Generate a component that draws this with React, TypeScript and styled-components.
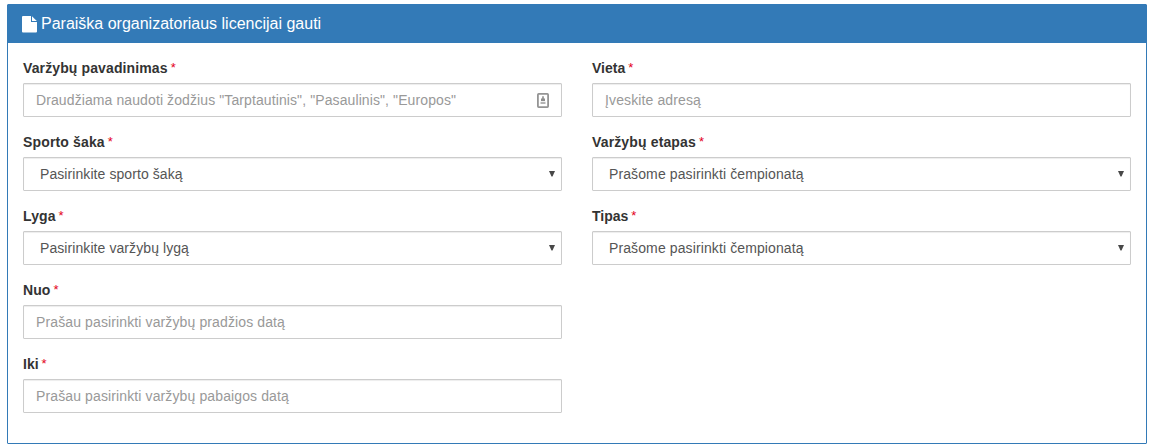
import React from "react";
import styled, { createGlobalStyle } from "styled-components";

const GlobalStyle = createGlobalStyle`
  *, *::before, *::after { box-sizing: border-box; }
  body {
    margin: 0;
    background: #fff;
    color: #333;
    font: 14px/20px "Liberation Sans", Arial, sans-serif;
  }
`;

const Panel = styled.section`
  margin: 4px 8px 0 7px;
  border: 1px solid #337ab7;
  border-radius: 1px;
`;

const PanelHeading = styled.header`
  display: flex;
  align-items: center;
  height: 38px;
  padding: 0 14px;
  background: #337ab7;
  color: #fff;
`;

const PanelTitle = styled.h3`
  margin: 0 0 0 4px;
  font-size: 16px;
  font-weight: 400;
  line-height: 18px;
`;

const PanelBody = styled.form`
  display: grid;
  grid-template-columns: 1fr 1fr;
  column-gap: 30px;
  padding: 15px;
`;

const Column = styled.div``;

const Field = styled.div`
  margin-bottom: 15px;
`;

const Label = styled.label<{ $spacing: number }>`
  display: flex;
  height: 20px;
  margin-bottom: 5px;
  font-weight: 700;
  white-space: nowrap;
  letter-spacing: ${(p) => p.$spacing}px;
`;

const Required = styled.span`
  margin-left: 3px;
  color: #e3001b;
  font-size: 13px;
  font-weight: 400;
  letter-spacing: 0;
`;

const Control = styled.div<{ $select?: boolean }>`
  display: flex;
  align-items: center;
  justify-content: space-between;
  height: 34px;
  padding: ${(p) => (p.$select ? "0 6px 0 16px" : "0 12px")};
  border: 1px solid #ccc;
  border-radius: 1px;
  background: #fff;
  box-shadow: inset 0 1px 1px rgba(0, 0, 0, 0.075);
  color: ${(p) => (p.$select ? "#555" : "#999")};
`;

const Value = styled.span<{ $spacing: number }>`
  white-space: nowrap;
  letter-spacing: ${(p) => p.$spacing}px;
`;

const FileIcon = () => (
  <svg width="15" height="17" viewBox="0 0 15 17" fill="#fff" aria-hidden="true">
    <path d="M1 0H9V6H15V15.6Q15 16.6 14 16.6H1Q0 16.6 0 15.6V1Q0 0 1 0ZM10 0.2L14.8 5H10Z" />
  </svg>
);

const ContactIcon = () => (
  <svg width="12" height="15" viewBox="0 0 12 15" aria-hidden="true">
    <rect x="0.9" y="0.9" width="10.2" height="13.2" rx="0.8" fill="#fff" stroke="#949494" strokeWidth="1.8" />
    <path d="M5.2 3.2H6.8V5.5H8V8H4V5.5H5.2Z" fill="#8c8c8c" />
    <path d="M3.5 8.8H8.5V11H3.5Z" fill="#b4b4b4" />
  </svg>
);

const CaretIcon = () => (
  <svg width="6" height="6" viewBox="0 0 6 6" aria-hidden="true">
    <path d="M0 0H6L3.5 5.6H2.5Z" fill="#484848" />
  </svg>
);

type FieldData = {
  label: string;
  text: string;
  select?: boolean;
  contact?: boolean;
  labelSpacing?: number;
  textSpacing?: number;
};

const left: FieldData[] = [
  {
    label: "Varžybų pavadinimas",
    text: 'Draudžiama naudoti žodžius "Tarptautinis", "Pasaulinis", "Europos"',
    contact: true,
    labelSpacing: 0.12,
    textSpacing: 0.1,
  },
  { label: "Sporto šaka", text: "Pasirinkite sporto šaką", select: true, labelSpacing: 0.15, textSpacing: 0.08 },
  { label: "Lyga", text: "Pasirinkite varžybų lygą", select: true, labelSpacing: 0.1, textSpacing: 0.08 },
  { label: "Nuo", text: "Prašau pasirinkti varžybų pradžios datą", labelSpacing: 0.1, textSpacing: 0.12 },
  { label: "Iki", text: "Prašau pasirinkti varžybų pabaigos datą", textSpacing: 0.12 },
];

const right: FieldData[] = [
  { label: "Vieta", text: "Įveskite adresą", textSpacing: 0.12 },
  { label: "Varžybų etapas", text: "Prašome pasirinkti čempionatą", select: true, labelSpacing: 0.14, textSpacing: 0.11 },
  { label: "Tipas", text: "Prašome pasirinkti čempionatą", select: true, textSpacing: 0.11 },
];

const FormField = ({ field }: { field: FieldData }) => (
  <Field>
    <Label $spacing={field.labelSpacing ?? 0}>
      {field.label}
      <Required>*</Required>
    </Label>
    <Control $select={field.select}>
      <Value $spacing={field.textSpacing ?? 0}>{field.text}</Value>
      {field.contact && <ContactIcon />}
      {field.select && <CaretIcon />}
    </Control>
  </Field>
);

export default function App() {
  return (
    <>
      <GlobalStyle />
      <Panel>
        <PanelHeading>
          <FileIcon />
          <PanelTitle>Paraiška organizatoriaus licencijai gauti</PanelTitle>
        </PanelHeading>
        <PanelBody>
          {[left, right].map((fields, i) => (
            <Column key={i}>
              {fields.map((field) => (
                <FormField key={field.label} field={field} />
              ))}
            </Column>
          ))}
        </PanelBody>
      </Panel>
    </>
  );
}
